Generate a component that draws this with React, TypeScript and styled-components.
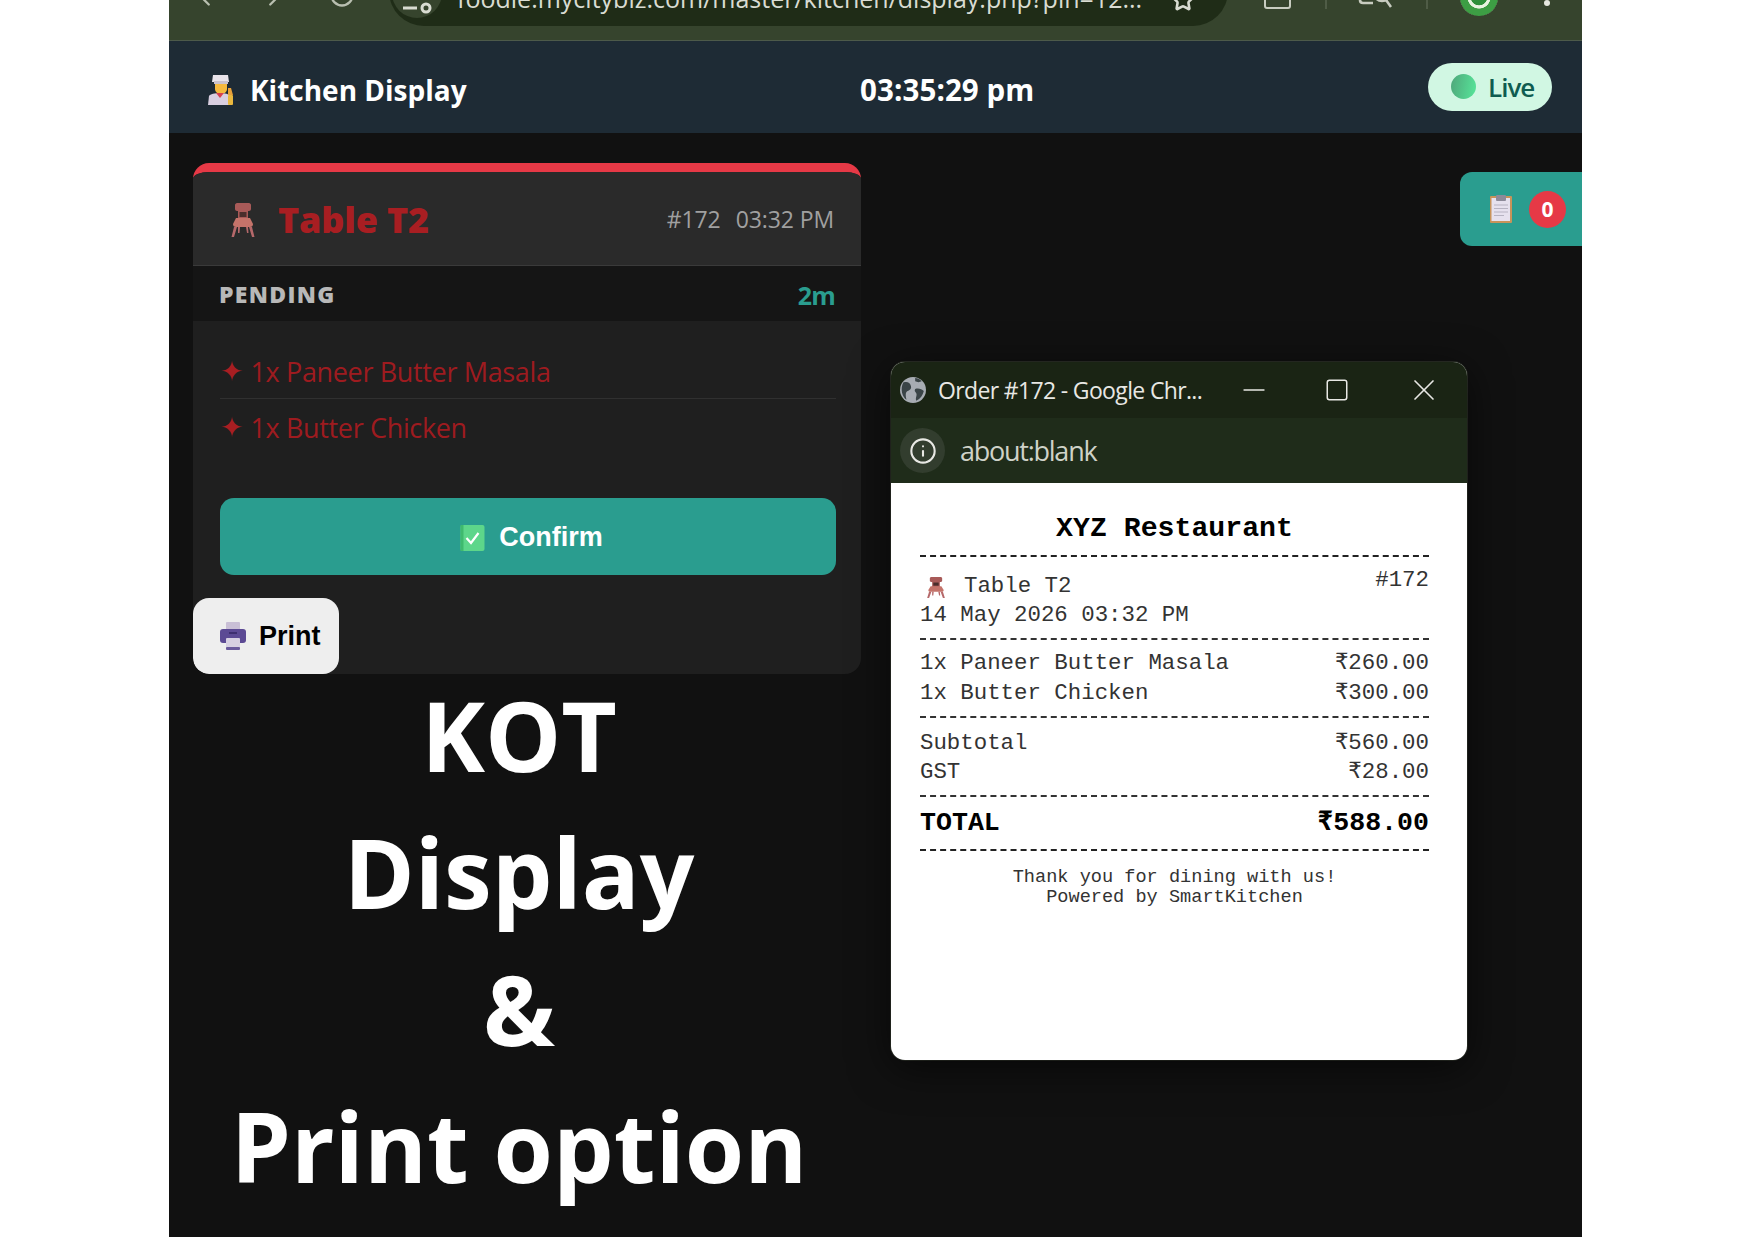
import React from 'react';
import styled, { createGlobalStyle } from 'styled-components';
import { ChevronLeft, ChevronRight, RotateCw, Star, Info, Minus, Square, X } from 'lucide-react';

const GlobalStyle = createGlobalStyle`
  html, body {
    margin: 0;
    padding: 0;
    background: #fff;
    overflow: hidden;
  }
  * { box-sizing: border-box; }
`;

const UI_FONT = `'Open Sans', 'Noto Sans', sans-serif`;
const RECEIPT_FONT = `'Liberation Mono', 'DejaVu Sans Mono', monospace`;

function ChefIcon() {
  return (
    <svg width="28" height="32" viewBox="0 0 28 32">
      <path d="M6 1h15l1 7H5z" fill="#e9e4ea" />
      <rect x="7" y="7" width="14" height="3" fill="#c9c1cc" />
      <path d="M8 10h12v5c0 3-3 5-6 5s-6-2-6-5z" fill="#f5b93e" />
      <path d="M2 22c1-2 6-3 11-3s9 1 10 3l1 9H1z" fill="#d9cfe0" />
      <path d="M9 19h8l-4 5z" fill="#d8414e" />
      <rect x="21" y="21" width="5" height="10" rx="1" fill="#eab83e" />
      <path d="M21 14l3 0 2 7h-5z" fill="#e8a13a" />
    </svg>
  );
}

function ChairIcon({ width, height }: { width: number; height: number }) {
  return (
    <svg width={width} height={height} viewBox="0 0 26 34" preserveAspectRatio="none">
      <path d="M5 2c0-1 1-2 2-2h12c1 0 2 1 2 2v4c0 1-1 2-2 2h-1v8H8V8H7C6 8 5 7 5 6z" fill="#a85a58" />
      <rect x="9.5" y="9" width="7" height="5" fill="#4a2e2c" />
      <path d="M6 15h14l3 6c0 2-1 3-3 3H6c-2 0-3-1-3-3z" fill="#c4736a" />
      <path d="M4 24h3L4 34H1.5zM19 24h3l2.5 10H22zM8 24h2l-.5 6H8zM16 24h2l.5 6H17z" fill="#b5686a" />
    </svg>
  );
}

function ClipboardIcon() {
  return (
    <svg width="22" height="28" viewBox="0 0 22 28">
      <rect x="0" y="1" width="22" height="27" rx="1" fill="#c8935a" />
      <rect x="1.5" y="3" width="18.5" height="23" fill="#e6e1ee" />
      <rect x="6" y="0" width="10" height="6" rx="1" fill="#8d8a99" />
      <path d="M4 10h14M4 13.5h14M4 17h14M4 20.5h10" stroke="#b7b3c2" strokeWidth="1.2" />
    </svg>
  );
}

function CheckIcon() {
  return (
    <svg width="25" height="26" viewBox="0 0 24 26">
      <rect x="0" y="0" width="24" height="26" rx="2" fill="#5dd68a" />
      <rect x="0" y="0" width="3" height="26" fill="#3fb96e" />
      <path d="M6 13l4.5 5L18 8" fill="none" stroke="#fff" strokeWidth="2.2" />
    </svg>
  );
}

function PrinterIcon() {
  return (
    <svg width="26" height="28" viewBox="0 0 26 28">
      <rect x="6" y="0" width="14" height="9" rx="1" fill="#c9bfd6" />
      <rect x="0" y="7" width="26" height="14" rx="3" fill="#5c4a94" />
      <rect x="9" y="10" width="8" height="2" fill="#3e2f70" />
      <rect x="6" y="16" width="14" height="11" rx="1" fill="#d7d0e2" />
      <rect x="6" y="25" width="14" height="3" rx="1" fill="#6a5a9c" />
    </svg>
  );
}

function GlobeIcon() {
  return (
    <svg width="26" height="26" viewBox="0 0 24 24">
      <circle cx="12" cy="12" r="12" fill="#a7acb3" />
      <path d="M3 5c4-1 6 0 7 3s-1 4-3 5-2 4-1 8C2 18 0 11 3 5zM14 11c3-1 6 0 8 2-1 4-3 7-7 9-1-3 1-5 0-7s-2-2-1-4zM14 1c2 0 4 1 6 3-2 1-4 1-6 0z" fill="#3a4447" />
    </svg>
  );
}

function TuneIcon() {
  return (
    <svg width="32" height="32" viewBox="0 0 32 32" fill="none" stroke="#d9dcd2" strokeWidth="3">
      <path d="M2 14h18M2 24h14" />
      <circle cx="25" cy="24" r="4" />
    </svg>
  );
}

function SidePanelIcon() {
  return (
    <svg width="34" height="30" viewBox="0 0 34 30" fill="none" stroke="#c8ccc0" strokeWidth="2.6">
      <path d="M2 0v17c0 2 1 3 3 3h10" />
      <circle cx="24" cy="10" r="8" />
      <path d="M28 17l5 7" />
    </svg>
  );
}

export default function App() {
  return (
    <>
      <GlobalStyle />
      <Page>
        <Frame>
          <BrowserBar>
            <NavIcons>
              <ChevronLeft size={30} strokeWidth={1.8} />
              <ChevronRight size={30} strokeWidth={1.8} />
              <ReloadIcon size={28} strokeWidth={2} />
            </NavIcons>
            <UrlPill>
              <SiteBadge>
                <TuneIcon />
              </SiteBadge>
              <UrlText>foodie.mycitybiz.com/master/kitchen/display.php?pin=12...</UrlText>
              <BookmarkIcon size={24} strokeWidth={2.6} />
            </UrlPill>
            <BarTools>
              <ToolBox />
              <ToolDivider />
              <SidePanelSlot>
                <SidePanelIcon />
              </SidePanelSlot>
              <ToolDivider />
              <Avatar />
              <MenuDot />
            </BarTools>
          </BrowserBar>

          <Header>
            <Brand>
              <ChefIcon />
              <span>Kitchen Display</span>
            </Brand>
            <Clock>03:35:29 pm</Clock>
            <LivePill>
              <LiveDot />
              Live
            </LivePill>
          </Header>

          <Main>
            <QueueTab>
              <ClipboardIcon />
              <CountBadge>0</CountBadge>
            </QueueTab>

            <LeftColumn>
              <OrderCard>
                <CardHead>
                  <TableName>
                    <ChairIcon width={26} height={34} />
                    <span>Table T2</span>
                  </TableName>
                  <OrderMeta>
                    <span>#172</span>
                    <span>03:32 PM</span>
                  </OrderMeta>
                </CardHead>
                <StatusRow>
                  <StatusLabel>PENDING</StatusLabel>
                  <Elapsed>2m</Elapsed>
                </StatusRow>
                <ItemList>
                  <Item>
                    <Sparkle>✦</Sparkle> 1x Paneer Butter Masala
                  </Item>
                  <Item>
                    <Sparkle>✦</Sparkle> 1x Butter Chicken
                  </Item>
                </ItemList>
                <ConfirmButton type="button">
                  <CheckIcon />
                  <span>Confirm</span>
                </ConfirmButton>
                <PrintButton type="button">
                  <PrinterIcon />
                  Print
                </PrintButton>
              </OrderCard>
              <Caption>
                KOT
                <br />
                Display
                <br />
                &amp;
                <br />
                Print option
              </Caption>
            </LeftColumn>

            <PopupWindow>
              <TitleBar>
                <GlobeIcon />
                <TitleText>Order #172 - Google Chr...</TitleText>
                <WindowControls>
                  <ControlSlot>
                    <Minus size={34} strokeWidth={1.1} />
                  </ControlSlot>
                  <ControlSlot>
                    <MaximizeIcon size={26} strokeWidth={1.4} />
                  </ControlSlot>
                  <ControlSlot>
                    <X size={36} strokeWidth={1.1} />
                  </ControlSlot>
                </WindowControls>
              </TitleBar>
              <AddressBar>
                <InfoBadge>
                  <Info size={28} strokeWidth={1.8} />
                </InfoBadge>
                <AddressText>about:blank</AddressText>
              </AddressBar>
              <Receipt>
                <ReceiptTitle>XYZ Restaurant</ReceiptTitle>
                <ReceiptSection $pad="7px 0 11px" $gap={5}>
                  <ReceiptRow>
                    <TableLine>
                      <ChairIcon width={20} height={21} />
                      <span>Table T2</span>
                    </TableLine>
                    <OrderNo>#172</OrderNo>
                  </ReceiptRow>
                  <ReceiptDate>14 May 2026 03:32 PM</ReceiptDate>
                </ReceiptSection>
                <ReceiptSection $pad="11px 0 11px" $gap={6}>
                  <ReceiptRow>
                    <span>1x Paneer Butter Masala</span>
                    <span>₹260.00</span>
                  </ReceiptRow>
                  <ReceiptRow>
                    <span>1x Butter Chicken</span>
                    <span>₹300.00</span>
                  </ReceiptRow>
                </ReceiptSection>
                <ReceiptSection $pad="13px 0 11px" $gap={5}>
                  <ReceiptRow>
                    <span>Subtotal</span>
                    <span>₹560.00</span>
                  </ReceiptRow>
                  <ReceiptRow>
                    <span>GST</span>
                    <span>₹28.00</span>
                  </ReceiptRow>
                </ReceiptSection>
                <TotalRow>
                  <span>TOTAL</span>
                  <span>₹588.00</span>
                </TotalRow>
                <ReceiptFooter>
                  Thank you for dining with us!
                  <br />
                  Powered by SmartKitchen
                </ReceiptFooter>
              </Receipt>
            </PopupWindow>
          </Main>
        </Frame>
      </Page>
    </>
  );
}

const Page = styled.div`
  width: 1750px;
  height: 1237px;
  padding: 0 168px 0 169px;
  background: #fff;
  overflow: hidden;
`;

const Frame = styled.div`
  height: 100%;
  display: flex;
  flex-direction: column;
  background: #111111;
  font-family: ${UI_FONT};
`;

const BrowserBar = styled.div`
  flex: 0 0 41px;
  display: flex;
  align-items: flex-end;
  background: #36442d;
  border-bottom: 1px solid #4d5a4a;
  overflow: hidden;
  color: #d9dcd2;
`;

const NavIcons = styled.div`
  flex: 0 0 220px;
  display: flex;
  align-items: flex-end;
  gap: 39px;
  padding: 0 0 28px 21px;
  color: #b9bfb0;
`;

const ReloadIcon = styled(RotateCw)`
  margin-bottom: 3px;
`;

const UrlPill = styled.div`
  flex: 0 0 839px;
  height: 70px;
  margin-bottom: 14px;
  padding: 0 33px 0 3px;
  display: flex;
  align-items: flex-end;
  border-radius: 35px;
  background: #1f2c17;
`;

const SiteBadge = styled.div`
  flex: 0 0 50px;
  height: 50px;
  margin-bottom: 8px;
  padding: 0 0 2px 9px;
  display: flex;
  align-items: flex-end;
  border-radius: 50%;
  background: #36442d;
`;

const UrlText = styled.span`
  flex: 1;
  margin: 0 0 13px 15px;
  font-size: 25px;
  line-height: 30px;
  white-space: nowrap;
  color: #d9dcd2;
`;

const BookmarkIcon = styled(Star)`
  margin-bottom: 14px;
  flex-shrink: 0;
`;

const BarTools = styled.div`
  flex: 1;
  display: flex;
  align-items: flex-end;
  padding-left: 36px;
`;

const ToolBox = styled.div`
  width: 27px;
  height: 24px;
  margin-bottom: 31px;
  border: 2.5px solid #c8ccc0;
  border-radius: 3px;
`;

const ToolDivider = styled.div`
  width: 2px;
  height: 14px;
  margin: 0 31px 31px 34px;
  background: #4f5c46;
`;

const SidePanelSlot = styled.div`
  height: 30px;
  margin-bottom: 27px;
  flex: 0 0 34px;
`;

const Avatar = styled.div`
  flex: 0 0 38px;
  height: 38px;
  margin: 0 0 24px 1px;
  border-radius: 50%;
  background: radial-gradient(circle, #2e8f3a 0 30%, #e8f3e0 32% 42%, #3d9e44 44% 70%, #a6dca0 72%);
`;

const MenuDot = styled.div`
  width: 6px;
  height: 6px;
  margin: 0 0 34px 46px;
  background: #e6e8e0;
  border-radius: 50%;
`;

const Header = styled.header`
  flex: 0 0 92px;
  display: grid;
  grid-template-columns: 652px auto 1fr;
  align-items: center;
  padding: 0 30px 0 38px;
  background: #1e2b35;
  color: #fff;
`;

const Brand = styled.div`
  display: flex;
  align-items: center;
  gap: 15px;
  padding-top: 5px;
  font-size: 28px;
  font-weight: 700;
`;

const Clock = styled.div`
  padding: 5px 0 0 1px;
  font-size: 29.5px;
  font-weight: 700;
  letter-spacing: 0.1px;
`;

const LivePill = styled.div`
  justify-self: end;
  width: 124px;
  height: 48px;
  margin-bottom: 1px;
  padding-left: 23px;
  display: flex;
  align-items: center;
  gap: 12px;
  border-radius: 24px;
  background: #d1f7e3;
  color: #0f5c50;
  font-size: 26px;
  font-weight: 600;
  letter-spacing: -1px;
`;

const LiveDot = styled.span`
  flex: 0 0 25px;
  height: 25px;
  border-radius: 50%;
  background: linear-gradient(100deg, #4fa67a, #57e69a);
`;

const Main = styled.main`
  position: relative;
  flex: 1;
  display: flex;
  align-items: flex-start;
  gap: 30px;
  padding: 30px 0 0 24px;
`;

const QueueTab = styled.div`
  position: absolute;
  top: 39px;
  right: 0;
  width: 122px;
  height: 74px;
  padding-left: 30px;
  display: flex;
  align-items: center;
  gap: 17px;
  border-radius: 12px 0 0 12px;
  background: #2a9d8f;
`;

const CountBadge = styled.span`
  flex: 0 0 37px;
  height: 37px;
  display: flex;
  align-items: center;
  justify-content: center;
  border-radius: 50%;
  background: #e63946;
  color: #fff;
  font-size: 21px;
  font-weight: 700;
`;

const LeftColumn = styled.div`
  flex: 0 0 668px;
  display: flex;
  flex-direction: column;
`;

const OrderCard = styled.section`
  display: flex;
  flex-direction: column;
  height: 511px;
  border-top: 9px solid #e63946;
  border-radius: 16px;
  background: #1f1f1f;
  overflow: hidden;
`;

const CardHead = styled.div`
  flex: 0 0 94px;
  display: flex;
  align-items: center;
  justify-content: space-between;
  padding: 0 27px 0 37px;
  background: #2a2a2a;
  border-bottom: 1px solid #3a3a3a;
`;

const TableName = styled.h2`
  margin: 2px 0 0;
  display: flex;
  align-items: center;
  gap: 22px;
  color: #a81e22;
  font-size: 36px;
  font-weight: 800;
  letter-spacing: -0.2px;
`;

const OrderMeta = styled.div`
  display: flex;
  gap: 15px;
  color: #a0a0a0;
  font-size: 23px;
  letter-spacing: -0.1px;
`;

const StatusRow = styled.div`
  flex: 0 0 55px;
  display: flex;
  align-items: center;
  justify-content: space-between;
  padding: 0 26px;
  background: #151515;
`;

const StatusLabel = styled.span`
  padding-top: 1px;
  color: #b8b8b8;
  font-size: 23px;
  font-weight: 800;
  letter-spacing: 1.3px;
`;

const Elapsed = styled.span`
  padding-top: 2px;
  color: #2a9d8f;
  font-size: 25px;
  font-weight: 700;
  letter-spacing: -0.8px;
`;

const ItemList = styled.div`
  padding: 24px 25px 0 27px;
`;

const Item = styled.div`
  height: 55px;
  display: flex;
  align-items: center;
  gap: 7px;
  color: #9e1b1f;
  font-size: 27px;
  letter-spacing: -0.35px;

  &:first-child {
    height: 54px;
    margin-bottom: 1px;
    border-bottom: 1px solid #303030;
  }
`;

const Sparkle = styled.span`
  font-family: 'DejaVu Sans', sans-serif;
  font-size: 28px;
  color: #a81e22;
  letter-spacing: 0;
`;

const ConfirmButton = styled.button`
  align-self: center;
  width: 616px;
  height: 77px;
  margin: 43px 0 0 1px;
  padding: 3px 0 0 8px;
  border: 0;
  border-radius: 14px;
  display: flex;
  align-items: center;
  justify-content: center;
  gap: 14px;
  background: #2a9d8f;
  color: #fff;
  font-family: 'Liberation Sans', Arial, sans-serif;
  font-size: 27px;
  font-weight: 700;
`;

const PrintButton = styled.button`
  align-self: flex-start;
  width: 146px;
  height: 77px;
  margin-top: 23px;
  padding: 1px 0 0 27px;
  border: 0;
  border-radius: 16px;
  display: flex;
  align-items: center;
  gap: 13px;
  background: #eeeeee;
  color: #000;
  font-family: 'Liberation Sans', Arial, sans-serif;
  font-size: 27px;
  font-weight: 700;
`;

const Caption = styled.div`
  margin: -8px 16px 0 0;
  color: #fff;
  font-size: 96px;
  font-weight: 700;
  line-height: 137px;
  text-align: center;
  white-space: nowrap;
`;

const PopupWindow = styled.section`
  flex: 0 0 576px;
  height: 698px;
  margin-top: 199px;
  display: flex;
  flex-direction: column;
  border-radius: 14px;
  background: #fff;
  overflow: hidden;
  box-shadow: 0 8px 40px rgba(0, 0, 0, 0.6), 0 0 0 1px #2c3028;
`;

const TitleBar = styled.div`
  flex: 0 0 56px;
  display: flex;
  align-items: center;
  padding-left: 9px;
  background: #1a2414;
  color: #e8e8e4;
`;

const TitleText = styled.span`
  flex: 0 0 273px;
  margin-left: 12px;
  font-size: 23px;
  letter-spacing: -0.65px;
  white-space: nowrap;
`;

const WindowControls = styled.div`
  flex: 1;
  display: flex;
  align-items: center;
`;

const ControlSlot = styled.div`
  flex: 0 0 85px;
  display: flex;
  align-items: center;
  justify-content: center;
`;

const MaximizeIcon = styled(Square)`
  margin-right: 4px;
`;

const AddressBar = styled.div`
  flex: 0 0 65px;
  display: flex;
  align-items: center;
  padding-left: 9px;
  background: #1f2c1a;
  color: #e8e8e4;
`;

const InfoBadge = styled.div`
  flex: 0 0 45px;
  height: 45px;
  display: flex;
  align-items: center;
  justify-content: center;
  border-radius: 50%;
  background: #323d2e;
`;

const AddressText = styled.span`
  margin-left: 15px;
  font-size: 27px;
  letter-spacing: -1.25px;
  color: #cfd2c8;
`;

const Receipt = styled.div`
  flex: 1;
  padding: 32px 38px 0 29px;
  font-family: ${RECEIPT_FONT};
  font-size: 22.4px;
  color: #333;
`;

const ReceiptTitle = styled.div`
  height: 42px;
  border-bottom: 2px dashed #222;
  font-size: 28.2px;
  font-weight: 700;
  line-height: 28px;
  text-align: center;
  color: #000;
`;

const ReceiptSection = styled.div<{ $pad: string; $gap: number }>`
  display: flex;
  flex-direction: column;
  gap: ${(p) => p.$gap}px;
  padding: ${(p) => p.$pad};
  border-bottom: 2px dashed #333;
  line-height: 24px;
`;

const ReceiptRow = styled.div`
  display: flex;
  justify-content: space-between;
  align-items: flex-start;
`;

const TableLine = styled.span`
  display: flex;
  align-items: flex-end;
  gap: 18px;
  padding: 10px 0 0 6px;
`;

const OrderNo = styled.span`
  margin-top: 4px;
`;

const ReceiptDate = styled.div``;

const TotalRow = styled.div`
  display: flex;
  justify-content: space-between;
  align-items: center;
  height: 54px;
  padding-bottom: 1px;
  border-bottom: 2px dashed #222;
  font-size: 26.6px;
  font-weight: 700;
  line-height: 30px;
  color: #000;
`;

const ReceiptFooter = styled.div`
  padding-top: 17px;
  font-size: 18.6px;
  line-height: 20px;
  text-align: center;
`;
